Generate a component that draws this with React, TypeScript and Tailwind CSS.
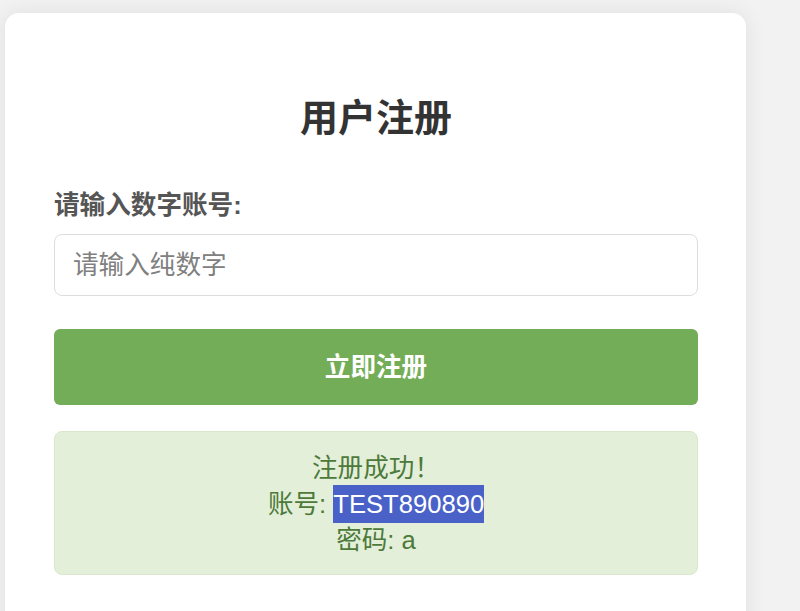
export default function App() {
  return (
    <div
      className="min-h-[611px] bg-[#f2f2f2] pl-[5px] pt-[13px] overflow-hidden"
      style={{ fontFamily: '"Liberation Sans", "Noto Sans CJK SC", sans-serif' }}
    >
      <div className="w-[741px] min-h-[640px] bg-white rounded-[14px] shadow-[0_0_22px_rgba(0,0,0,0.08)] pl-[49px] pr-[48px] pt-[48px] pb-[48px]">
        <h2 className="mt-[34px] text-center text-[38px] leading-[46px] font-bold text-[#333]">
          用户注册
        </h2>
        <label className="block mt-[46px] text-[25.6px] leading-[36px] font-bold text-[#555]">
          请输入数字账号:
        </label>
        <input
          type="text"
          placeholder="请输入纯数字"
          className="mt-[11px] block w-full h-[62px] px-[18px] text-[25.6px] border border-[#ddd] rounded-[8px] outline-none placeholder:text-[#808080] text-[#333]"
        />
        <button
          type="button"
          className="mt-[33px] block w-full h-[76px] bg-[#74ad57] text-white text-[25.6px] font-bold rounded-[6px]"
        >
          立即注册
        </button>
        <div className="mt-[26px] h-[144px] py-[18px] bg-[#e3efd9] border border-[#d8e8cb] rounded-[8px] text-center text-[25.6px] leading-[36px] text-[#4d7a3a]">
          <div>注册成功！</div>
          <div>
            账号: <span className="bg-[#4a62c8] text-white py-[5px]">TEST890890</span>
          </div>
          <div>密码: a</div>
        </div>
      </div>
    </div>
  );
}
